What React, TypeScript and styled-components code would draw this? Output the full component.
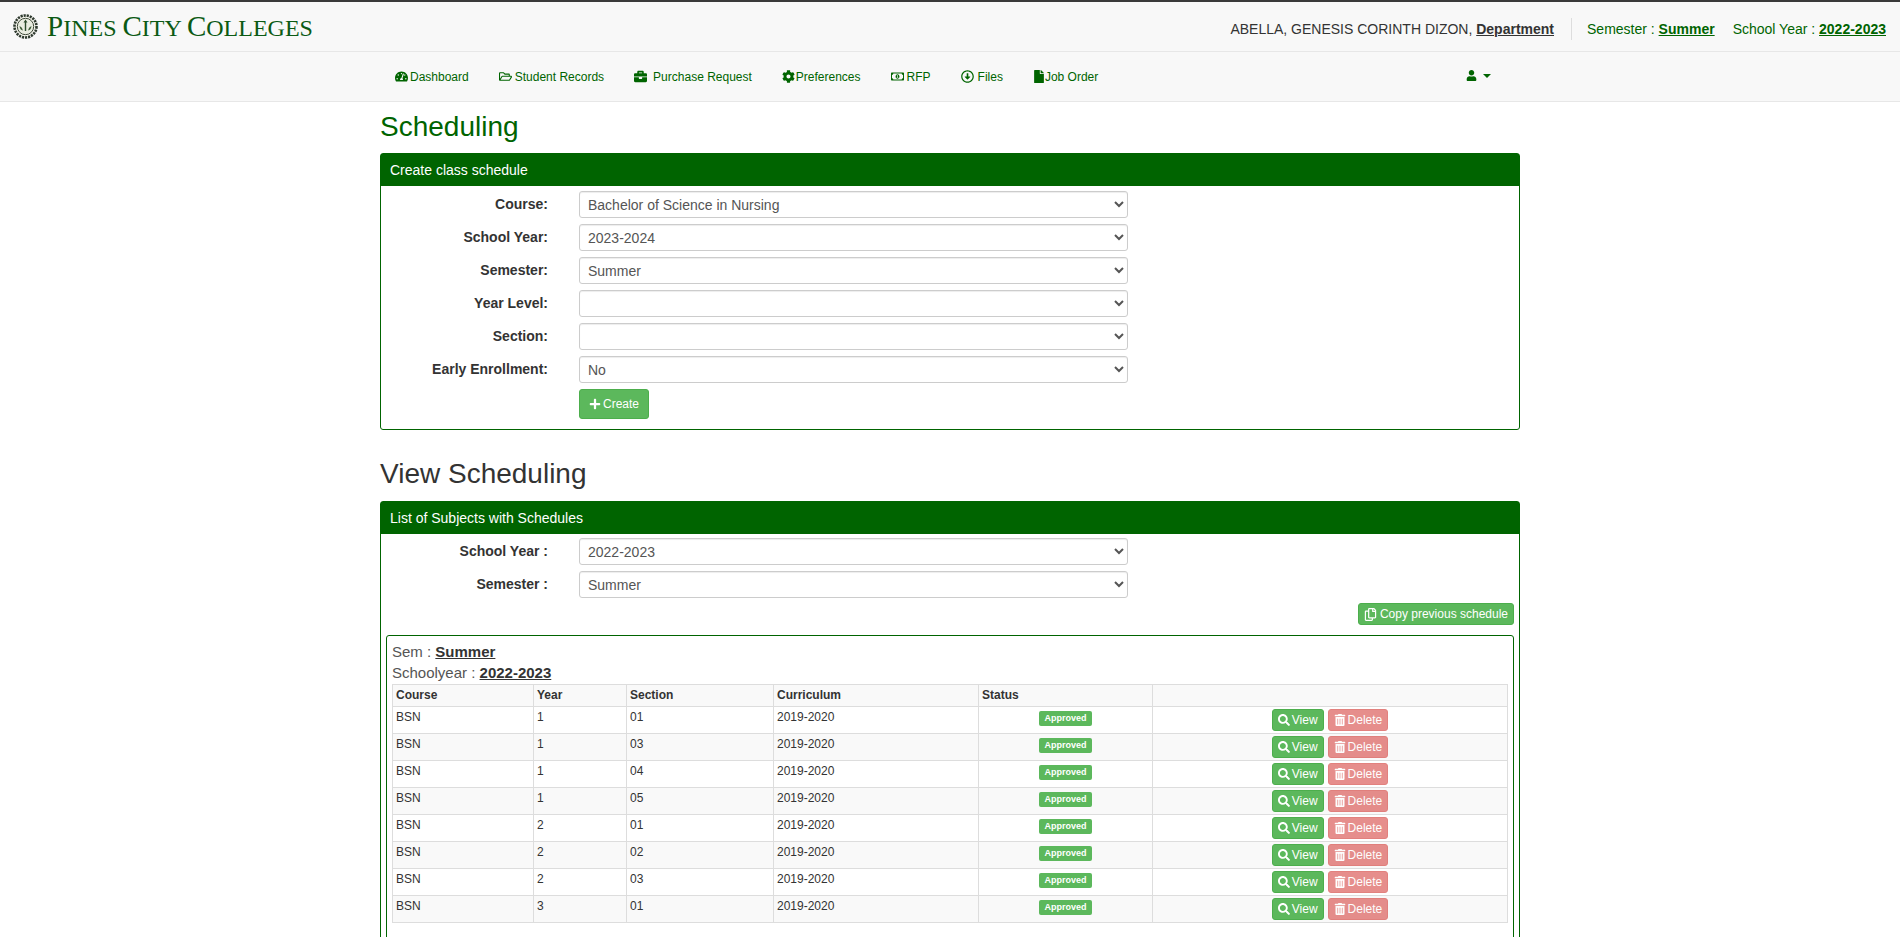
import * as React from 'react';
import styled, { createGlobalStyle } from 'styled-components';
import {
  FaBriefcase,
  FaCog,
  FaFile,
  FaPlus,
  FaRegArrowAltCircleDown,
  FaRegCopy,
  FaRegFolderOpen,
  FaRegMoneyBillAlt,
  FaSearch,
  FaTachometerAlt,
  FaTrashAlt,
  FaUser,
} from 'react-icons/fa';

const GREEN = '#006400';

const GlobalStyle = createGlobalStyle`
  html, body {
    margin: 0;
    background: #fff;
    font-family: "Liberation Sans", Arial, sans-serif;
    font-size: 14px;
    color: #333;
  }
  * {
    box-sizing: border-box;
  }
`;

const TopBar = styled.header`
  height: 52px;
  border-top: 2px solid #3a3a3a;
  border-bottom: 1px solid #e7e7e7;
  background: #f8f8f8;
  display: flex;
  align-items: center;
  justify-content: space-between;
  padding: 0 14px 0 13px;
`;

const Brand = styled.div`
  display: flex;
  align-items: center;
  gap: 9px;
`;

const BrandName = styled.span`
  font-family: "Liberation Serif", serif;
  font-size: 24px;
  text-transform: uppercase;
  color: #0b5a14;
  line-height: 1;
`;

const BrandCap = styled.span`
  font-size: 29px;
`;

const UserInfo = styled.div`
  display: flex;
  align-items: center;
  font-size: 14px;
  margin-top: 5px;
`;

const UserName = styled.span`
  color: #333;
  padding-right: 17px;
  border-right: 1px solid #ddd;
  line-height: 22px;
`;

const Term = styled.span`
  color: ${GREEN};
  margin-left: 15px;

  & + & {
    margin-left: 18px;
  }

  b {
    text-decoration: underline;
  }
`;

const NavBar = styled.nav`
  height: 50px;
  border-bottom: 1px solid #e7e7e7;
  background: #f8f8f8;
`;

const Container = styled.div`
  width: 1140px;
  margin: 0 auto;
`;

const NavInner = styled(Container)`
  display: flex;
  align-items: center;
  height: 49px;
`;

const NavLink = styled.a`
  display: flex;
  align-items: center;
  padding: 0 15px;
  font-size: 12px;
  color: ${GREEN};
`;

const NavIcon = styled.span<{ $box: number }>`
  display: inline-flex;
  align-items: center;
  width: ${(p) => p.$box}px;
  font-size: 13px;
`;

const UserMenu = styled.a`
  margin-left: auto;
  margin-right: 29px;
  display: flex;
  align-items: center;
  gap: 6px;
  color: ${GREEN};
  font-size: 11px;
  margin-top: -2px;
`;

const Caret = styled.span`
  border-top: 4px solid ${GREEN};
  border-left: 4px solid transparent;
  border-right: 4px solid transparent;
`;

const Heading = styled.h2<{ $green?: boolean }>`
  margin: 0;
  font-size: 28px;
  font-weight: 400;
  line-height: 32px;
  color: ${(p) => (p.$green ? GREEN : '#333')};
`;

const PageHeading = styled(Heading)`
  padding-top: 9px;
  margin-bottom: 10px;
`;

const ViewHeading = styled(Heading)`
  padding-top: 28px;
  margin-bottom: 11px;
`;

const Panel = styled.section`
  border: 1px solid ${GREEN};
  border-radius: 3px;
`;

const PanelTitle = styled.div`
  height: 32px;
  background: ${GREEN};
  color: #fff;
  padding: 0 9px;
  display: flex;
  align-items: center;
  font-size: 14px;
`;

const Form = styled.div`
  padding: 5px 0 10px;
  display: flex;
  flex-direction: column;
  gap: 6px;
`;

const FormRow = styled.label`
  display: grid;
  grid-template-columns: 167px 549px;
  column-gap: 31px;
  align-items: center;
  height: 27px;
`;

const FormLabel = styled.span`
  font-weight: 700;
  text-align: right;
  color: #333;
  margin-top: -2px;
`;

const Select = styled.select`
  width: 100%;
  height: 27px;
  font-family: "Liberation Sans", Arial, sans-serif;
  font-size: 14px;
  color: #555;
  background: #fff;
  padding: 0 4px;
  border: 1px solid #ccc;
  border-radius: 3px;
  box-shadow: inset 0 1px 1px rgba(0, 0, 0, 0.075);
`;

const ActionRow = styled.div`
  padding-left: 198px;
`;

const Button = styled.button<{ $danger?: boolean }>`
  display: inline-flex;
  align-items: center;
  gap: 2px;
  border: 1px solid ${(p) => (p.$danger ? '#d43f3a' : '#4cae4c')};
  border-radius: 3px;
  color: #fff;
  background: ${(p) => (p.$danger ? '#d9534f' : '#5cb85c')};
  opacity: ${(p) => (p.$danger ? 0.65 : 1)};
  font-family: "Liberation Sans", Arial, sans-serif;
  font-size: 12px;
  line-height: 18px;
  padding: 1px 5px;

  svg {
    font-size: 12px;
  }
`;

const CreateButton = styled(Button)`
  height: 30px;
  padding: 0 9px;
`;

const CopyButton = styled(Button)`
  gap: 3px;

  svg {
    font-size: 13px;
  }
`;

const ListForm = styled(Form)`
  padding: 4px 0 0;
`;

const CopyRow = styled.div`
  display: flex;
  justify-content: flex-end;
  padding: 5px 5px 10px;
`;

const InnerBox = styled.div`
  margin: 0 5px;
  border: 1px solid ${GREEN};
  border-radius: 3px;
  padding: 5px 5px 16px;
`;

const TermLine = styled.div`
  line-height: 21px;
  font-size: 15px;
  color: #555;

  b {
    color: #333;
    text-decoration: underline;
  }
`;

const Table = styled.table`
  width: 1115px;
  border-collapse: collapse;
  table-layout: fixed;
  font-size: 12px;
  border: 1px solid #ddd;
  margin-top: 1px;

  th,
  td {
    border: 1px solid #ddd;
    text-align: left;
    vertical-align: top;
    padding: 2px 3px;
    line-height: 17px;
    color: #333;
  }

  th {
    height: 22px;
  }

  tbody tr {
    height: 27px;
  }

  tbody tr:nth-child(odd) td {
    background: #fff;
  }

  tbody tr:nth-child(even) td,
  th {
    background: #f9f9f9;
  }
`;

const StatusCell = styled.td`
  && {
    text-align: center;
  }
`;

const ActionCell = styled.td`
  && {
    text-align: center;
    padding: 2px 3px 0;
  }
`;

const ActionGroup = styled.div`
  display: inline-flex;
  gap: 4px;
`;

const Badge = styled.span`
  display: inline-block;
  background: #5cb85c;
  color: #fff;
  font-size: 9px;
  font-weight: 700;
  line-height: 13px;
  padding: 1px 5.5px;
  border-radius: 2px;
  margin-top: 2px;
`;

const Seal = () => (
  <svg width="25" height="25" viewBox="0 0 25 25" aria-hidden="true">
    <circle cx="12.5" cy="12.5" r="11" fill="#f4f4ec" stroke="#2f3a2f" strokeWidth="2.6" strokeDasharray="2.2 0.9" />
    <circle cx="12.5" cy="12.5" r="8.2" fill="#e9ece0" stroke="#3f4a3a" strokeWidth="1" />
    <path d="M12.5 5.5l2 3h-1.3V17h-1.4V8.5h-1.3z" fill="#2c4a2c" />
    <path d="M6.5 12c1.6.6 3 2.2 3.4 4.6-1.8-.3-3.2-2-3.4-4.6zM18.5 12c-1.6.6-3 2.2-3.4 4.6 1.8-.3 3.2-2 3.4-4.6z" fill="#3a5a34" />
  </svg>
);

const navItems = [
  { icon: <FaTachometerAlt />, label: 'Dashboard', box: 15 },
  { icon: <FaRegFolderOpen />, label: 'Student Records', box: 16 },
  { icon: <FaBriefcase />, label: 'Purchase Request', box: 19 },
  { icon: <FaCog />, label: 'Preferences', box: 14 },
  { icon: <FaRegMoneyBillAlt />, label: 'RFP', box: 16 },
  { icon: <FaRegArrowAltCircleDown />, label: 'Files', box: 17 },
  { icon: <FaFile />, label: 'Job Order', box: 12 },
];

const createFields = [
  { label: 'Course:', value: 'Bachelor of Science in Nursing' },
  { label: 'School Year:', value: '2023-2024' },
  { label: 'Semester:', value: 'Summer' },
  { label: 'Year Level:', value: '' },
  { label: 'Section:', value: '' },
  { label: 'Early Enrollment:', value: 'No' },
];

const listFields = [
  { label: 'School Year :', value: '2022-2023' },
  { label: 'Semester :', value: 'Summer' },
];

const rows = [
  ['1', '01'],
  ['1', '03'],
  ['1', '04'],
  ['1', '05'],
  ['2', '01'],
  ['2', '02'],
  ['2', '03'],
  ['3', '01'],
];

const Field = ({ label, value }: { label: string; value: string }) => (
  <FormRow>
    <FormLabel>{label}</FormLabel>
    <Select defaultValue={value}>
      <option value={value}>{value}</option>
    </Select>
  </FormRow>
);

export default function App() {
  return (
    <>
      <GlobalStyle />
      <TopBar>
        <Brand>
          <Seal />
          <BrandName>
            <BrandCap>P</BrandCap>ines <BrandCap>C</BrandCap>ity <BrandCap>C</BrandCap>olleges
          </BrandName>
        </Brand>
        <UserInfo>
          <UserName>
            ABELLA, GENESIS CORINTH DIZON, <b><u>Department</u></b>
          </UserName>
          <Term>
            Semester : <b>Summer</b>
          </Term>
          <Term>
            School Year : <b>2022-2023</b>
          </Term>
        </UserInfo>
      </TopBar>
      <NavBar>
        <NavInner>
          {navItems.map((item) => (
            <NavLink key={item.label}>
              <NavIcon $box={item.box}>{item.icon}</NavIcon>
              {item.label}
            </NavLink>
          ))}
          <UserMenu>
            <FaUser />
            <Caret />
          </UserMenu>
        </NavInner>
      </NavBar>
      <Container>
        <PageHeading $green>Scheduling</PageHeading>
        <Panel>
          <PanelTitle>Create class schedule</PanelTitle>
          <Form>
            {createFields.map((f) => (
              <Field key={f.label} {...f} />
            ))}
            <ActionRow>
              <CreateButton>
                <FaPlus />
                Create
              </CreateButton>
            </ActionRow>
          </Form>
        </Panel>
        <ViewHeading>View Scheduling</ViewHeading>
        <Panel>
          <PanelTitle>List of Subjects with Schedules</PanelTitle>
          <ListForm>
            {listFields.map((f) => (
              <Field key={f.label} {...f} />
            ))}
          </ListForm>
          <CopyRow>
            <CopyButton>
              <FaRegCopy />
              Copy previous schedule
            </CopyButton>
          </CopyRow>
          <InnerBox>
            <TermLine>
              Sem : <b>Summer</b>
            </TermLine>
            <TermLine>
              Schoolyear : <b>2022-2023</b>
            </TermLine>
            <Table>
              <colgroup>
                <col width="141" />
                <col width="93" />
                <col width="147" />
                <col width="205" />
                <col width="174" />
                <col width="355" />
              </colgroup>
              <thead>
                <tr>
                  <th>Course</th>
                  <th>Year</th>
                  <th>Section</th>
                  <th>Curriculum</th>
                  <th>Status</th>
                  <th />
                </tr>
              </thead>
              <tbody>
                {rows.map(([year, section]) => (
                  <tr key={year + section}>
                    <td>BSN</td>
                    <td>{year}</td>
                    <td>{section}</td>
                    <td>2019-2020</td>
                    <StatusCell>
                      <Badge>Approved</Badge>
                    </StatusCell>
                    <ActionCell>
                      <ActionGroup>
                        <Button>
                          <FaSearch />
                          View
                        </Button>
                        <Button $danger>
                          <FaTrashAlt />
                          Delete
                        </Button>
                      </ActionGroup>
                    </ActionCell>
                  </tr>
                ))}
              </tbody>
            </Table>
          </InnerBox>
        </Panel>
      </Container>
    </>
  );
}
